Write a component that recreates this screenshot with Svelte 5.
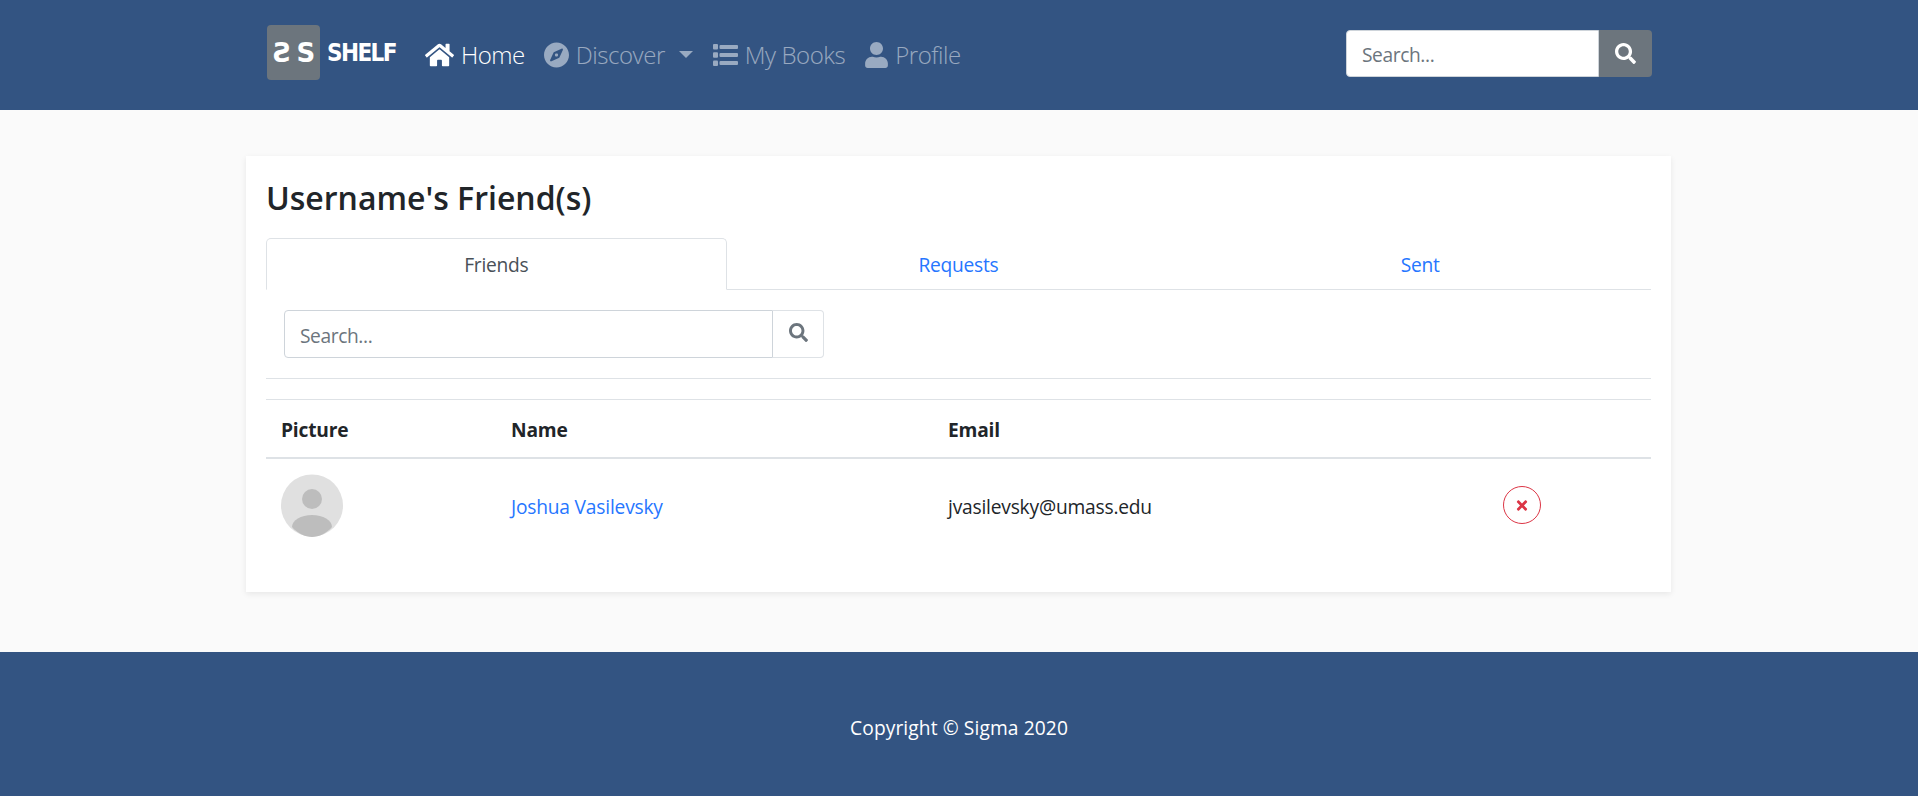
<script>
  const paths = {
    home: 'M280.37 148.26L96 300.11V464a16 16 0 0 0 16 16l112.06-.29a16 16 0 0 0 15.92-16V368a16 16 0 0 1 16-16h64a16 16 0 0 1 16 16v95.64a16 16 0 0 0 16 16.05L464 480a16 16 0 0 0 16-16V300L295.67 148.26a12.19 12.19 0 0 0-15.3 0zM571.6 251.47L488 182.56V44.05a12 12 0 0 0-12-12h-56a12 12 0 0 0-12 12v72.61L318.47 43a48 48 0 0 0-61 0L4.34 251.47a12 12 0 0 0-1.6 16.9l25.5 31A12 12 0 0 0 45.15 301l235.22-193.74a12.19 12.19 0 0 1 15.3 0L530.9 301a12 12 0 0 0 16.9-1.6l25.5-31a12 12 0 0 0-1.7-16.93z',
    compass: 'M225.38 233.37c-12.5 12.5-12.5 32.76 0 45.25 12.49 12.5 32.76 12.5 45.25 0 12.5-12.5 12.5-32.76 0-45.25-12.5-12.49-32.76-12.49-45.25 0zM248 8C111.03 8 0 119.03 0 256s111.03 248 248 248 248-111.03 248-248S384.97 8 248 8zm126.14 148.05L308.17 300.4a31.938 31.938 0 0 1-15.77 15.77l-144.34 65.97c-16.65 7.61-33.81-9.55-26.2-26.2l65.98-144.35a31.938 31.938 0 0 1 15.77-15.77l144.34-65.97c16.65-7.6 33.8 9.55 26.19 26.2z',
    user: 'M224 256c70.7 0 128-57.3 128-128S294.7 0 224 0 96 57.3 96 128s57.3 128 128 128zm89.6 32h-16.7c-22.2 10.2-46.9 16-72.9 16s-50.6-5.8-72.9-16h-16.7C60.2 288 0 348.2 0 422.4V464c0 26.5 21.5 48 48 48h352c26.5 0 48-21.5 48-48v-41.6c0-74.2-60.2-134.4-134.4-134.4z',
    search: 'M505 442.7L405.3 343c-4.5-4.5-10.6-7-17-7H372c27.6-35.3 44-79.7 44-128C416 93.1 322.9 0 208 0S0 93.1 0 208s93.1 208 208 208c48.3 0 92.7-16.4 128-44v16.3c0 6.4 2.5 12.5 7 17l99.7 99.7c9.4 9.4 24.6 9.4 33.9 0l28.3-28.3c9.4-9.4 9.4-24.6.1-34zM208 336c-70.7 0-128-57.2-128-128 0-70.7 57.2-128 128-128 70.7 0 128 57.2 128 128 0 70.7-57.2 128-128 128z',
    times: 'M242.72 256l100.07-100.07c12.28-12.28 12.28-32.19 0-44.48l-22.24-22.24c-12.28-12.28-32.19-12.28-44.48 0L176 189.28 75.93 89.21c-12.28-12.28-32.19-12.28-44.48 0L9.21 111.45c-12.28 12.28-12.28 32.19 0 44.48L109.28 256 9.21 356.07c-12.28 12.28-12.28 32.19 0 44.48l22.24 22.24c12.28 12.28 32.2 12.28 44.48 0L176 322.72l100.07 100.07c12.28 12.28 32.2 12.28 44.48 0l22.24-22.24c12.28-12.28 12.28-32.19 0-44.48L242.72 256z'
  };

  const tabs = ['Friends', 'Requests', 'Sent'];
</script>

<nav class="navbar">
  <div class="brand">
    <div class="logo"><span class="mirror">S</span><span>S</span></div>
    <span class="shelf">SHELF</span>
  </div>

  <a class="nav-link active" href="#home">
    <svg class="home-icon" viewBox="0 0 576 512"><path d={paths.home} /></svg>
    Home
  </a>
  <a class="nav-link" href="#discover">
    <svg class="compass-icon" viewBox="0 0 496 512"><path d={paths.compass} /></svg>
    Discover
    <span class="caret"></span>
  </a>
  <a class="nav-link books" href="#books">
    <svg class="list-icon" viewBox="0 0 25 22">
      <rect y="0" width="5" height="5.5" rx="1" />
      <rect y="8.2" width="5" height="5.5" rx="1" />
      <rect y="16.5" width="5" height="5.5" rx="1" />
      <rect x="6.5" y="1" width="18.5" height="4" rx="1" />
      <rect x="6.5" y="9" width="18.5" height="4" rx="1" />
      <rect x="6.5" y="17" width="18.5" height="4" rx="1" />
    </svg>
    My Books
  </a>
  <a class="nav-link" href="#profile">
    <svg class="user-icon" viewBox="0 0 448 512"><path d={paths.user} /></svg>
    Profile
  </a>

  <form class="nav-search">
    <input type="text" placeholder="Search..." />
    <button type="button" aria-label="Search">
      <svg viewBox="0 0 512 512"><path d={paths.search} /></svg>
    </button>
  </form>
</nav>

<main>
  <section class="card">
    <h1>Username's Friend(s)</h1>

    <ul class="tabs">
      {#each tabs as tab, i}
        <li class:active={i === 0}>{tab}</li>
      {/each}
    </ul>

    <div class="filter">
      <input type="text" placeholder="Search..." />
      <button type="button" aria-label="Search">
        <svg viewBox="0 0 512 512"><path d={paths.search} /></svg>
      </button>
    </div>

    <hr />

    <table>
      <colgroup>
        <col class="c1" />
        <col class="c2" />
        <col class="c3" />
        <col />
      </colgroup>
      <thead>
        <tr>
          <th>Picture</th>
          <th>Name</th>
          <th>Email</th>
          <th></th>
        </tr>
      </thead>
      <tbody>
        <tr>
          <td>
            <svg class="avatar" viewBox="0 0 62 63">
              <circle cx="31" cy="31.5" r="31" fill="#e0e0e0" />
              <circle cx="31" cy="25" r="10" fill="#bdbdbd" />
              <path d="M11 53 C11 46 20 41 31 41 C42 41 51 46 51 53 C46 59 38 63 31 63 C24 63 16 59 11 53 Z" fill="#bdbdbd" />
            </svg>
          </td>
          <td class="text"><a class="friend" href="#friend">Joshua Vasilevsky</a></td>
          <td class="text">jvasilevsky@umass.edu</td>
          <td>
            <button class="remove" type="button" aria-label="Remove friend">
              <svg viewBox="0 0 352 512"><path d={paths.times} /></svg>
            </button>
          </td>
        </tr>
      </tbody>
    </table>
  </section>
</main>

<footer>Copyright © Sigma 2020</footer>

<style>
  :global(body) {
    background: #fafafa;
    font-family: "Open Sans", "Noto Sans", sans-serif;
    color: #212529;
  }

  .navbar {
    height: 110px;
    box-sizing: border-box;
    background: #335482;
    display: flex;
    align-items: center;
    padding: 0 266px 3px 267px;
  }

  .brand {
    display: flex;
    align-items: center;
    margin: 0 29px 2px 0;
  }

  .logo {
    width: 53px;
    height: 55px;
    background: #6c757d;
    border-radius: 4px;
    display: flex;
    align-items: center;
    justify-content: center;
    gap: 6px;
    color: #fff;
    font: 700 26px "DejaVu Sans", sans-serif;
  }

  .mirror {
    transform: scaleX(-1);
  }

  .shelf {
    margin-left: 7px;
    color: #fff;
    font: 700 24px "DejaVu Sans", sans-serif;
    font-stretch: condensed;
    letter-spacing: -1.6px;
  }

  .nav-link {
    display: flex;
    align-items: center;
    gap: 7px;
    margin: 2px 19px 0 0;
    font-size: 24px;
    font-weight: 300;
    letter-spacing: -0.45px;
    color: rgba(255, 255, 255, 0.5);
    text-decoration: none;
  }

  .nav-link.books {
    margin-right: 20px;
  }

  .nav-link svg {
    height: 26px;
    fill: currentColor;
  }

  .nav-link.active {
    color: #fff;
  }

  .nav-link .home-icon {
    width: 29px;
  }

  .nav-link .compass-icon {
    width: 25px;
  }

  .nav-link .list-icon {
    width: 25px;
    height: 22px;
  }

  .nav-link .user-icon {
    width: 23px;
  }

  .caret {
    margin: 0 1px 0 7px;
    border-top: 7px solid currentColor;
    border-left: 7.5px solid transparent;
    border-right: 7.5px solid transparent;
  }

  .nav-search {
    margin-left: auto;
    display: flex;
    width: 306px;
    height: 47px;
  }

  .nav-search input,
  .filter input {
    flex: 1;
    min-width: 0;
    box-sizing: border-box;
    padding: 2px 15px 0;
    font: 400 19.2px "Open Sans", sans-serif;
    letter-spacing: -0.4px;
    background: #fff;
    outline: none;
  }

  .nav-search input::placeholder,
  .filter input::placeholder {
    color: #6c757d;
  }

  .nav-search input {
    border: 1px solid #ced4da;
    border-radius: 4px 0 0 4px;
  }

  .nav-search button {
    width: 53px;
    border: 0;
    border-radius: 0 4px 4px 0;
    background: #6c757d;
    display: flex;
    align-items: center;
    justify-content: center;
    padding: 0;
  }

  .nav-search svg {
    width: 21px;
    height: 21px;
    fill: #fff;
  }

  main {
    padding: 46px 247px 60px 246px;
  }

  .card {
    height: 436px;
    box-sizing: border-box;
    background: #fff;
    box-shadow: 0 2px 6px rgba(0, 0, 0, 0.08);
    padding: 21px 20px 0;
  }

  h1 {
    margin: 0 0 19px;
    font-size: 32px;
    line-height: 42px;
    font-weight: 600;
  }

  .tabs {
    list-style: none;
    margin: 0;
    padding: 0;
    display: grid;
    grid-template-columns: repeat(3, 1fr);
    border-bottom: 1px solid #dee2e6;
    font-size: 19.2px;
    letter-spacing: -0.25px;
    color: #2676ff;
  }

  .tabs li {
    height: 50px;
    line-height: 51px;
    margin-bottom: -1px;
    text-align: center;
    border: 1px solid transparent;
    border-radius: 5px 5px 0 0;
  }

  .tabs li.active {
    margin-right: 1px;
    color: #495057;
    background: #fff;
    border-color: #dee2e6 #dee2e6 #fff;
  }

  .filter {
    display: flex;
    width: 540px;
    height: 48px;
    margin: 20px 0 20px 18px;
  }

  .filter input {
    border: 1px solid #ced4da;
    border-radius: 4px 0 0 4px;
  }

  .filter button {
    width: 51px;
    border: 1px solid #dee2e6;
    border-left: 0;
    border-radius: 0 4px 4px 0;
    background: #fff;
    display: flex;
    align-items: center;
    justify-content: center;
    padding: 0 0 4px;
  }

  .filter svg {
    width: 19px;
    height: 19px;
    fill: #6c757d;
  }

  hr {
    margin: 0 0 20px;
    border: 0;
    border-top: 1px solid #dee2e6;
  }

  table {
    width: 100%;
    table-layout: fixed;
    border-collapse: collapse;
    font-size: 19.2px;
    letter-spacing: -0.2px;
  }

  .c1 { width: 230px; }
  .c2 { width: 437px; }
  .c3 { width: 555px; }

  th {
    height: 58px;
    box-sizing: border-box;
    padding: 3px 15px 0;
    text-align: left;
    font-weight: 700;
    border-top: 1px solid #dee2e6;
    border-bottom: 2px solid #dee2e6;
  }

  td {
    padding: 15px;
    vertical-align: middle;
  }

  td.text {
    padding-top: 18px;
  }

  .avatar {
    display: block;
    width: 62px;
    height: 63px;
  }

  .friend {
    color: #2676ff;
    text-decoration: none;
  }

  .remove {
    width: 38px;
    height: 38px;
    padding: 0;
    border: 1px solid #dc3545;
    border-radius: 50%;
    background: #fff;
    display: flex;
    align-items: center;
    justify-content: center;
  }

  .remove svg {
    width: 12px;
    height: 15px;
    fill: #dc3545;
  }

  footer {
    height: 144px;
    box-sizing: border-box;
    padding-top: 7px;
    background: #335482;
    color: #fff;
    display: flex;
    align-items: center;
    justify-content: center;
    font-size: 19.2px;
    letter-spacing: 0.1px;
  }
</style>
